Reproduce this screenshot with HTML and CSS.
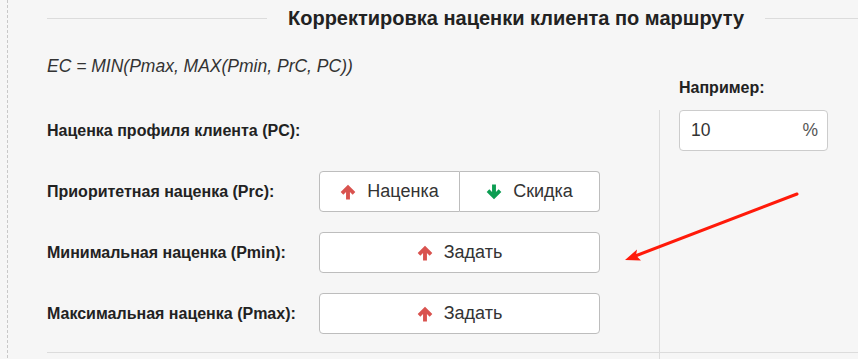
FILE: index.html
```html
<!DOCTYPE html>
<html lang="ru">
<head>
<meta charset="utf-8">
<title>Корректировка наценки клиента по маршруту</title>
<link rel="stylesheet" href="styles.css">
</head>
<body>
<div class="page">
  <div class="title-row">
    <div class="title-line left"></div>
    <h2 class="title">Корректировка наценки клиента по маршруту</h2>
    <div class="title-line right"></div>
  </div>
  <div class="formula">EC = MIN(Pmax, MAX(Pmin, PrC, PC))</div>
  <div class="main">
    <div class="rows">
      <div class="row"><div class="label">Наценка профиля клиента (PC):</div></div>
      <div class="row">
        <div class="label">Приоритетная наценка (Prc):</div>
        <div class="btn-group">
          <button class="btn half"><svg class="ico up" viewBox="0 0 14 14"><path d="M7 0.6 L13.4 7 L11.1 9.3 L8.7 6.9 V13.6 H5.3 V6.9 L2.9 9.3 L0.6 7 Z"/></svg>Наценка</button>
          <button class="btn half"><svg class="ico down" viewBox="0 0 14 14"><path d="M7 13.4 L13.4 7 L11.1 4.7 L8.7 7.1 V0.4 H5.3 V7.1 L2.9 4.7 L0.6 7 Z"/></svg>Скидка</button>
        </div>
      </div>
      <div class="row">
        <div class="label">Минимальная наценка (Pmin):</div>
        <button class="btn wide"><svg class="ico up" viewBox="0 0 14 14"><path d="M7 0.6 L13.4 7 L11.1 9.3 L8.7 6.9 V13.6 H5.3 V6.9 L2.9 9.3 L0.6 7 Z"/></svg>Задать</button>
      </div>
      <div class="row">
        <div class="label">Максимальная наценка (Pmax):</div>
        <button class="btn wide"><svg class="ico up" viewBox="0 0 14 14"><path d="M7 0.6 L13.4 7 L11.1 9.3 L8.7 6.9 V13.6 H5.3 V6.9 L2.9 9.3 L0.6 7 Z"/></svg>Задать</button>
      </div>
    </div>
    <div class="side">
      <div class="side-label">Например:</div>
      <div class="side-panel">
        <div class="input-box"><span class="val">10</span><span class="unit">%</span></div>
      </div>
    </div>
  </div>
  <div class="footer">
    <div></div>
    <div class="footer-side"></div>
  </div>
</div>
<svg class="annot" viewBox="0 0 858 359" width="858" height="359">
  <line x1="797" y1="194" x2="634" y2="256.5" stroke="#ff1a0a" stroke-width="3" stroke-linecap="round"/>
  <polygon points="625,260 637,249.5 636,255.5 641,260.5" fill="#ff1a0a"/>
</svg>
</body>
</html>
```

FILE: styles.css
```css
html, body {
  margin: 0;
  padding: 0;
}
body {
  background: #f6f6f6;
  font-family: "Liberation Sans", Arial, sans-serif;
  color: #222;
  overflow: hidden;
  width: 858px;
  height: 359px;
  position: relative;
}
.page {
  margin-left: 7px;
  border-left: 1px dashed #c8c8c8;
  padding-left: 39px;
  min-height: 359px;
  box-sizing: border-box;
}
.title-row {
  display: flex;
  align-items: center;
  gap: 21px;
  padding-top: 6px;
  height: 24px;
}
.title-line {
  height: 1px;
  background: #dcdcdc;
}
.title-line.left {
  width: 220px;
}
.title-line.right {
  flex: 1;
}
.title {
  margin: 0;
  font-size: 20px;
  line-height: 24px;
  font-weight: bold;
  color: #222;
  white-space: nowrap;
}
.formula {
  margin-top: 26px;
  font-style: italic;
  font-size: 17.5px;
  line-height: 20px;
  color: #333;
}
.main {
  display: grid;
  grid-template-columns: 612px 1fr;
}
.rows {
  display: flex;
  flex-direction: column;
  gap: 20px;
  padding-top: 34px;
  padding-bottom: 18px;
}
.row {
  display: flex;
  align-items: center;
  height: 41px;
}
.label {
  width: 272px;
  font-size: 16px;
  font-weight: bold;
  color: #222;
}
.btn {
  display: flex;
  align-items: center;
  justify-content: center;
  gap: 11px;
  height: 41px;
  background: #fff;
  border: 1px solid #bdbdbd;
  border-radius: 4px;
  font-family: "Liberation Sans", Arial, sans-serif;
  font-size: 18px;
  color: #333;
  padding: 0;
  box-sizing: border-box;
}
.btn.wide {
  width: 281px;
}
.btn-group {
  display: flex;
  width: 281px;
}
.btn.half {
  flex: 1;
}
.btn-group .btn:first-child {
  border-top-right-radius: 0;
  border-bottom-right-radius: 0;
}
.btn-group .btn:last-child {
  border-left: none;
  border-top-left-radius: 0;
  border-bottom-left-radius: 0;
}
.ico {
  width: 16px;
  height: 16px;
}
.ico.up {
  fill: #d9534f;
}
.ico.down {
  fill: #0c9d52;
}
.side {
  display: flex;
  flex-direction: column;
}
.side-label {
  margin-top: 2px;
  padding-left: 20px;
  font-size: 16px;
  line-height: 20px;
  font-weight: bold;
  color: #222;
}
.side-panel {
  flex: 1;
  margin-top: 12px;
  border-left: 1px solid #dcdcdc;
  padding-left: 19px;
}
.input-box {
  width: 149px;
  height: 41px;
  box-sizing: border-box;
  display: flex;
  align-items: center;
  justify-content: space-between;
  padding: 0 9px 0 11px;
  background: #fff;
  border: 1px solid #cccccc;
  border-radius: 4px;
  font-size: 17.5px;
  color: #333;
}
.unit {
  color: #555;
}
.footer {
  display: grid;
  grid-template-columns: 612px 1fr;
  border-top: 1px solid #dcdcdc;
  height: 20px;
}
.footer-side {
  border-left: 1px solid #dcdcdc;
}
.annot {
  position: absolute;
  left: 0;
  top: 0;
  pointer-events: none;
}
```
